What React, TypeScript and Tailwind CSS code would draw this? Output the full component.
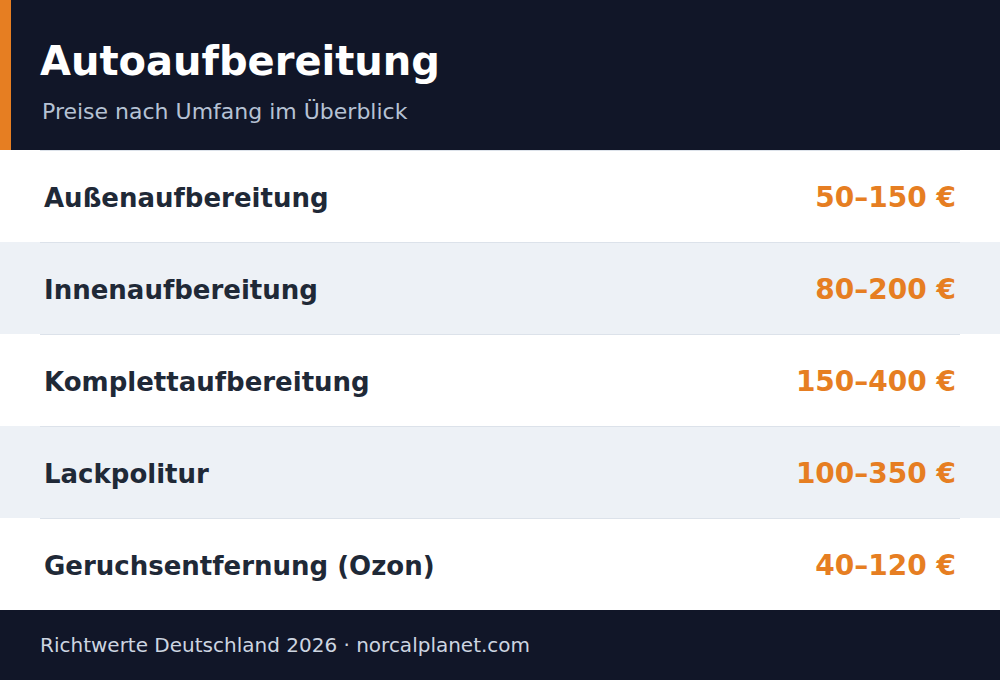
const rows = [
  { label: "Außenaufbereitung", price: "50–150 €" },
  { label: "Innenaufbereitung", price: "80–200 €" },
  { label: "Komplettaufbereitung", price: "150–400 €" },
  { label: "Lackpolitur", price: "100–350 €" },
  { label: "Geruchsentfernung (Ozon)", price: "40–120 €" },
];

export default function App() {
  return (
    <div
      className="w-[1000px] h-[680px] flex flex-col bg-white overflow-hidden"
      style={{ fontFamily: '"DejaVu Sans", sans-serif' }}
    >
      {/* Header */}
      <div className="h-[150px] flex bg-[#111628]">
        <div className="w-[11px] bg-[#e67e22]" />
        <div className="flex-1 pl-[29px] pt-[37px]">
          <h1 className="text-[40px] leading-[48px] font-bold text-white">Autoaufbereitung</h1>
          <p className="mt-[14px] ml-[2px] text-[22px] leading-[26px] text-[#b6c2d4]">
            Preise nach Umfang im Überblick
          </p>
        </div>
      </div>

      {/* Rows */}
      <div className="flex flex-col">
        {rows.map((r, i) => (
          <div key={r.label} className={i % 2 === 1 ? "bg-[#edf1f6]" : "bg-white"}>
            <div className="mx-10 h-[92px] px-1 pt-[3px] flex items-center justify-between border-t border-[#dce2ea]">
              <span className="text-[26px] font-bold text-[#1f2937]">{r.label}</span>
              <span className="text-[28px] font-bold text-[#e67e22]">{r.price}</span>
            </div>
          </div>
        ))}
      </div>

      {/* Footer */}
      <div className="flex-1 flex items-center bg-[#111628] px-10">
        <p className="text-[20px] leading-[24px] text-[#cdd5e1]">
          Richtwerte Deutschland 2026 · norcalplanet.com
        </p>
      </div>
    </div>
  );
}
